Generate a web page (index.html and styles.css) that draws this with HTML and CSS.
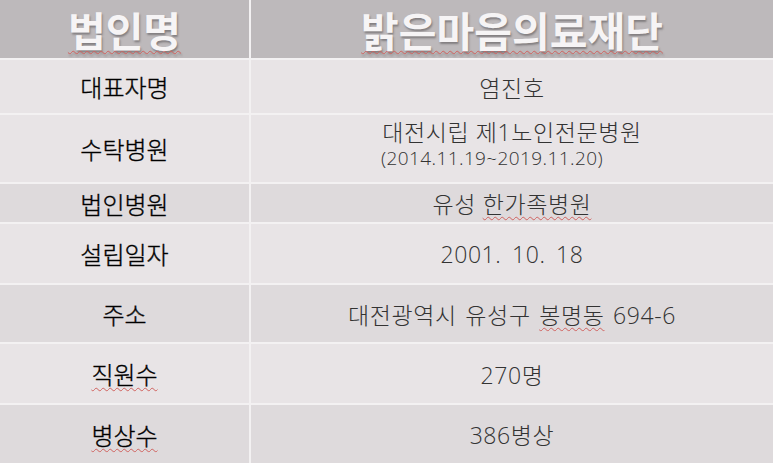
FILE: index.html
```html
<!DOCTYPE html>
<html lang="ko">
<head>
<meta charset="utf-8">
<title>법인 정보</title>
<link rel="stylesheet" href="styles.css">
</head>
<body>
<div class="table">
  <div class="cell head"><span class="spell">법인명</span></div>
  <div class="cell head"><span class="spell">밝은마음의료재단</span></div>

  <div class="cell key light"><span>대표자명</span></div>
  <div class="cell val light"><span>염진호</span></div>

  <div class="cell key light"><span>수탁병원</span></div>
  <div class="cell val light two">
    <span>대전시립 제1노인전문병원</span>
    <span class="sub">(2014.11.19~2019.11.20)</span>
  </div>

  <div class="cell key dark"><span>법인병원</span></div>
  <div class="cell val dark"><span>유성 <span class="spell">한가족병원</span></span></div>

  <div class="cell key light"><span>설립일자</span></div>
  <div class="cell val light"><span class="date">2001. 10. 18</span></div>

  <div class="cell key dark"><span>주소</span></div>
  <div class="cell val dark"><span class="addr">대전광역시 유성구 <span class="spell">봉명동</span> 694-6</span></div>

  <div class="cell key light"><span class="spell">직원수</span></div>
  <div class="cell val light"><span>270명</span></div>

  <div class="cell key dark"><span class="spell">병상수</span></div>
  <div class="cell val dark"><span>386병상</span></div>
</div>
</body>
</html>
```

FILE: styles.css
```css
html, body {
  margin: 0;
  padding: 0;
  background: #f3f1f2;
}

.table {
  width: 773px;
  height: 463px;
  display: grid;
  grid-template-columns: 249px 1fr;
  grid-template-rows: 58px 53px 67px 38px 59px 57px 59px 58px;
  column-gap: 2px;
  row-gap: 2px;
  background: #f3f1f2;
  font-family: "Noto Sans CJK KR", "Noto Sans", sans-serif;
}

.cell {
  display: flex;
  align-items: center;
  justify-content: center;
  white-space: nowrap;
}

.head {
  background: #bdb9bb;
  color: #f6f4f5;
  font-size: 41px;
  font-weight: 700;
  text-shadow: 1px 2px 2px rgba(60, 55, 58, 0.45);
  line-height: 1;
}

.light { background: #e8e4e6; }
.dark { background: #dedadc; }

.key {
  color: #000;
  font-size: 24px;
  font-weight: 300;
  -webkit-text-stroke: 0.35px #000;
}

.val {
  color: #333;
  font-size: 23px;
  font-weight: 300;
  letter-spacing: 0.6px;
  font-family: "Open Sans", "Noto Sans CJK KR", sans-serif;
}

.two {
  flex-direction: column;
  line-height: 28px;
  padding-bottom: 10px;
  box-sizing: border-box;
}

.sub {
  font-size: 19px;
  line-height: 24px;
  letter-spacing: 0.4px;
  padding-right: 40px;
}

.date {
  word-spacing: 4px;
}

.addr {
  word-spacing: 2px;
}

.spell {
  text-decoration: underline wavy #d0625f;
  text-decoration-thickness: 1px;
  text-underline-offset: 3px;
}
```
